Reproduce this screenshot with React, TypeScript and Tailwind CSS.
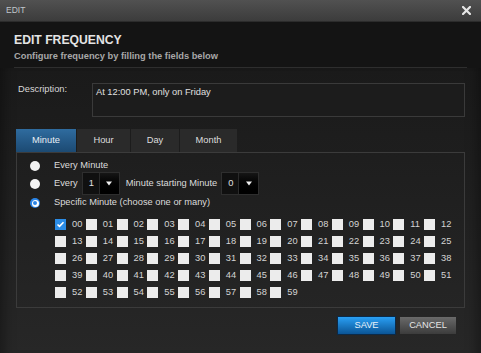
import React from "react";

const font = { fontFamily: '"Liberation Sans", Arial, sans-serif' };

function Radio({ checked }: { checked?: boolean }) {
  if (checked) {
    return (
      <div className="w-[10px] h-[10px] rounded-full bg-[#2a85e8] flex items-center justify-center shrink-0">
        <div className="w-[7px] h-[7px] rounded-full bg-white flex items-center justify-center">
          <div className="w-[4px] h-[4px] rounded-full bg-[#2a85e8]" />
        </div>
      </div>
    );
  }
  return <div className="w-[10px] h-[10px] rounded-full bg-[#f2f2f2] shrink-0" />;
}

function Select({ value }: { value: string }) {
  return (
    <div className="flex h-[23px] w-[38px] border border-[#2e2e2e] bg-[#101010] shrink-0">
      <div className="w-[16px] flex items-center pl-[6px] text-[#e0e0e0]">{value}</div>
      <div className="flex-1 border-l border-[#2a2a2a] bg-gradient-to-b from-[#161616] to-[#000000] flex items-center justify-center">
        <svg width="6" height="5" viewBox="0 0 6 5">
          <path d="M0 0.5 H6 L3 4.5 Z" fill="#f0f0f0" />
        </svg>
      </div>
    </div>
  );
}

function Check({ checked }: { checked?: boolean }) {
  if (checked) {
    return (
      <div className="w-[11px] h-[11px] bg-[#2b8ce6] flex items-center justify-center shrink-0">
        <svg width="11" height="11" viewBox="0 0 11 11">
          <path d="M2.5 5.5 L4.5 7.3 L8.5 3.2" stroke="#fff" strokeWidth="1.6" fill="none" />
        </svg>
      </div>
    );
  }
  return <div className="w-[11px] h-[11px] bg-[#ececec] shrink-0" />;
}

export default function App() {
  const minutes = Array.from({ length: 60 }, (_, i) => String(i).padStart(2, "0"));
  const tabs = [
    { label: "Minute", w: "w-[60px]", active: true },
    { label: "Hour", w: "w-[54px]" },
    { label: "Day", w: "w-[49px]" },
    { label: "Month", w: "w-[58px]" },
  ];
  return (
    <div style={font} className="w-[481px] h-[353px] flex flex-col overflow-hidden bg-[#1e1e1e]">
      {/* title bar */}
      <div className="h-[22px] shrink-0 flex items-center justify-between pl-[6px] pr-[10px] bg-gradient-to-b from-[#515151] to-[#3c3c3c] border-b border-[#2c2c2c]">
        <span className="text-[8.5px] text-[#c0c6cc] leading-none">EDIT</span>
        <svg width="9" height="9" viewBox="0 0 9 9">
          <path d="M1 1 L8 8 M8 1 L1 8" stroke="#e6e6e6" strokeWidth="2.2" strokeLinecap="square" />
        </svg>
      </div>
      {/* header */}
      <div className="h-[46px] shrink-0 bg-[#141414] px-[14px] pt-[11px] flex flex-col">
        <div className="text-[12.2px] leading-[14px] font-bold text-[#e4e4e4]">EDIT FREQUENCY</div>
        <div className="mt-[4px] text-[9.3px] leading-[10px] font-bold text-[#a8a8a8]">
          Configure frequency by filling the fields below
        </div>
        <div className="mt-[6px] h-px bg-[#2e2e2e]" />
      </div>
      {/* body */}
      <div className="flex-1 bg-gradient-to-b from-[#1a1a1a] to-[#272727] px-[16px] pt-[15px] flex flex-col text-[9.3px] text-[#dcdcdc] shadow-[inset_14px_0_12px_-10px_rgba(0,0,0,0.35),inset_-14px_0_12px_-10px_rgba(0,0,0,0.35)]">
        <div className="flex">
          <div className="w-[76px] pl-[2px] pt-[1px] leading-[10.4px] text-[#d8d8d8]">Description:</div>
          <div className="flex-1 h-[34px] border border-[#3a3a3a] bg-[#1c1c1c] pl-[3px] pt-[3px] leading-[10.4px] text-[#e0e0e0]">
            At 12:00 PM, only on Friday
          </div>
        </div>
        <div className="mt-[12px] flex h-[23px]">
          {tabs.map((t) => (
            <div
              key={t.label}
              className={
                t.active
                  ? `${t.w} flex items-center justify-center pt-[1px] bg-gradient-to-b from-[#2f6c9f] to-[#1c4a73] text-[#e8eef4]`
                  : `${t.w} flex items-center justify-center pt-[1px] bg-[#2a2a2a] border-l border-[#1c1c1c] text-[#dedede]`
              }
            >
              {t.label}
            </div>
          ))}
        </div>
        <div className="h-[156px] border border-[#3b3b3b] pt-[7px] pb-[3px] flex flex-col">
          <div className="h-[12px] flex items-center pl-[13px]">
            <Radio />
            <span className="ml-[14px]">Every Minute</span>
          </div>
          <div className="h-[23px] flex items-center pl-[13px]">
            <Radio />
            <span className="ml-[14px]">Every</span>
            <div className="ml-[4px]">
              <Select value="1" />
            </div>
            <span className="ml-[6px]">Minute starting Minute</span>
            <div className="ml-[4px]">
              <Select value="0" />
            </div>
          </div>
          <div className="h-[16px] flex items-center pl-[13px]">
            <Radio checked />
            <span className="ml-[14px]">Specific Minute (choose one or many)</span>
          </div>
          <div className="mt-[8px] pl-[38px] grid grid-cols-[repeat(13,30.75px)] auto-rows-[17px]">
            {minutes.map((m, i) => (
              <div key={m} className="flex items-start">
                <Check checked={i === 0} />
                <span className="ml-[6px] leading-[11px] text-[#d4d4d4]">{m}</span>
              </div>
            ))}
          </div>
        </div>
        <div className="mt-[8px] flex justify-end pr-[8px] gap-[3px]">
          <div className="w-[59px] h-[19px] flex items-center justify-center border border-[#0b2a48] bg-gradient-to-b from-[#2aa0f5] to-[#0b5596] text-[#e8f2fa]">
            SAVE
          </div>
          <div className="w-[58px] h-[19px] flex items-center justify-center border border-[#262626] bg-gradient-to-b from-[#6a6a6a] to-[#3c3c3c] text-[#e6e6e6]">
            CANCEL
          </div>
        </div>
      </div>
    </div>
  );
}
